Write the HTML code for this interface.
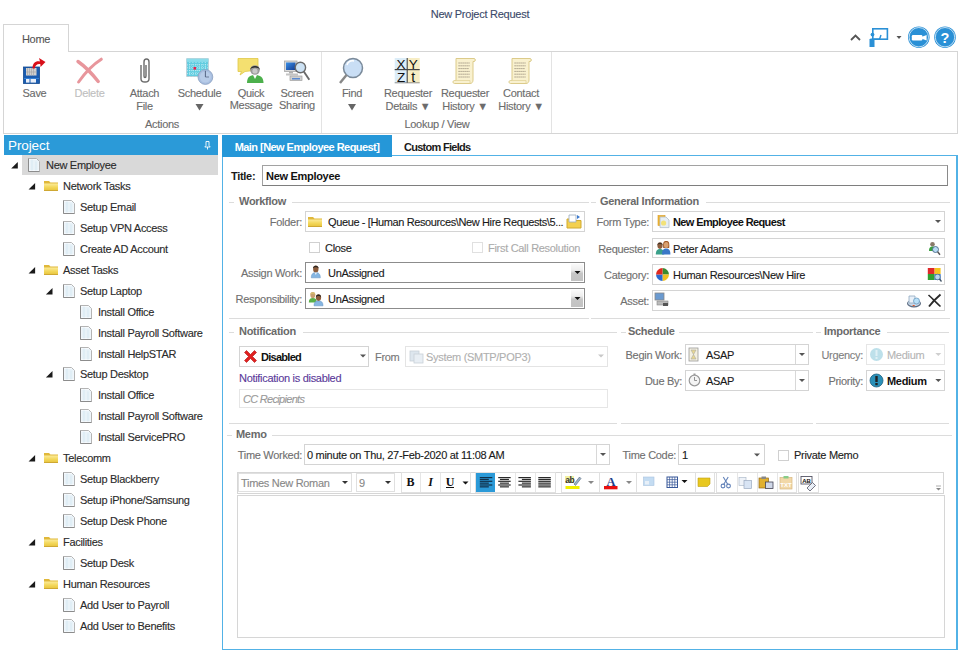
<!DOCTYPE html>
<html><head><meta charset="utf-8">
<style>
*{box-sizing:border-box;margin:0;padding:0}
html,body{width:960px;height:653px;overflow:hidden;background:#fff}
body{position:relative;font-family:"Liberation Sans",sans-serif;font-size:11px;color:#1a1a1a}
.a{position:absolute}
.t{position:absolute;white-space:nowrap;line-height:12px;font-size:11px;letter-spacing:-0.3px;-webkit-text-stroke:0.12px currentColor}
.g{color:#6e6e6e}
.b{font-weight:bold;-webkit-text-stroke:0}
.box{position:absolute;border:1px solid #d4d4d4;background:#fff}
.dk{border-color:#8c8c8c}
.rt{color:#666}
svg{position:absolute;overflow:visible}
</style></head><body>
<div class="t " style="left:380px;top:8px;width:200px;text-align:center;color:#3c4a6a;letter-spacing:-0.25px">New Project Request</div><div class="a" style="left:3px;top:24px;width:66px;height:28px;border:1px solid #d5d5d5;border-bottom:none;background:#fff;z-index:2"></div><div class="a" style="left:3px;top:51px;width:955px;height:83px;border:1px solid #d5d5d5;background:#fff;z-index:1"></div><div class="a" style="left:4px;top:51px;width:64px;height:2px;background:#fff;z-index:2"></div><div class="a" style="left:321px;top:52px;width:1px;height:81px;background:#e3e3e3;z-index:2"></div><div class="a" style="left:551px;top:52px;width:1px;height:81px;background:#e3e3e3;z-index:2"></div><div style="position:absolute;left:0;top:0;z-index:3"><div class="t " style="left:3px;top:33px;width:66px;text-align:center;color:#555">Home</div><div class="t " style="left:-5.5px;top:87px;width:80px;text-align:center;color:#6c6c6c">Save</div><div class="t " style="left:49.5px;top:87px;width:80px;text-align:center;color:#c0c0c0">Delete</div><div class="t " style="left:104.5px;top:87px;width:80px;text-align:center;color:#6c6c6c">Attach</div><div class="t " style="left:104.5px;top:100px;width:80px;text-align:center;color:#6c6c6c">File</div><div class="t " style="left:159.5px;top:87px;width:80px;text-align:center;color:#6c6c6c">Schedule</div><div class="t " style="left:211.0px;top:87px;width:80px;text-align:center;color:#6c6c6c">Quick</div><div class="t " style="left:211.0px;top:98.5px;width:80px;text-align:center;color:#6c6c6c">Message</div><div class="t " style="left:257.0px;top:87px;width:80px;text-align:center;color:#6c6c6c">Screen</div><div class="t " style="left:257.0px;top:98.5px;width:80px;text-align:center;color:#6c6c6c">Sharing</div><div class="t " style="left:312.0px;top:87px;width:80px;text-align:center;color:#6c6c6c">Find</div><div class="t " style="left:368.0px;top:87px;width:80px;text-align:center;color:#6c6c6c">Requester</div><div class="t " style="left:368.0px;top:100px;width:80px;text-align:center;color:#6c6c6c">Details &#9660;</div><div class="t " style="left:425.0px;top:87px;width:80px;text-align:center;color:#6c6c6c">Requester</div><div class="t " style="left:425.0px;top:100px;width:80px;text-align:center;color:#6c6c6c">History &#9660;</div><div class="t " style="left:481.0px;top:87px;width:80px;text-align:center;color:#6c6c6c">Contact</div><div class="t " style="left:481.0px;top:100px;width:80px;text-align:center;color:#6c6c6c">History &#9660;</div><div class="t " style="left:122.0px;top:118px;width:80px;text-align:center;color:#6c6c6c">Actions</div><div class="t " style="left:377.0px;top:118px;width:120px;text-align:center;color:#6c6c6c">Lookup / View</div><svg style="left:0px;top:0px;" width="960" height="140" viewBox="0 0 960 140"><polygon points="195.5,104 203.5,104 199.5,110.5" fill="#666"/><polygon points="348,104 356,104 352,110.5" fill="#666"/></svg></div><div style="position:absolute;left:0;top:0;z-index:4"><svg style="left:18px;top:54px;" width="30" height="32" viewBox="0 0 30 32">
<rect x="5.5" y="13" width="16" height="16.5" fill="#1a5cb0"/>
<rect x="5.5" y="13" width="16" height="16.5" fill="none" stroke="#154a90" stroke-width="0.8"/>
<rect x="8" y="14" width="10.5" height="7.5" fill="#d0d0d0"/>
<g stroke="#a8a8a8" stroke-width="0.7"><line x1="9.5" y1="14" x2="9.5" y2="21.5"/><line x1="11.5" y1="14" x2="11.5" y2="21.5"/><line x1="13.5" y1="14" x2="13.5" y2="21.5"/><line x1="15.5" y1="14" x2="15.5" y2="21.5"/><line x1="8" y1="18" x2="18.5" y2="18"/></g>
<rect x="8" y="25" width="3.5" height="3.6" fill="#e8eef8"/><rect x="12.5" y="25" width="5.5" height="3.6" fill="#e8eef8"/>
<rect x="6" y="24" width="15" height="0.8" fill="#3a8ae0"/>
<path d="M14.5 14.5 C14.5 9 18 6.5 22 7.5 L21 4 L27.5 8 L22.5 13 L22.3 10 C19.5 9.5 17 11 16.8 14.5 Z" fill="#d8101a"/>
</svg><svg style="left:75px;top:56px;" width="30" height="30" viewBox="0 0 30 30">
<path d="M3 5.5 Q13 12.5 23.2 25.5" stroke="#e8969c" stroke-width="3.4" stroke-linecap="round" fill="none"/>
<path d="M26.3 3.2 Q14 11 3.6 26" stroke="#e8969c" stroke-width="3" stroke-linecap="round" fill="none"/>
</svg><svg style="left:137px;top:56px;" width="16" height="30" viewBox="0 0 16 30">
<path d="M4 9 L4 23 C4 27 12 27 12 23 L12 6 C12 2 7 2 7 6 L7 20 C7 22 9 22 9 20 L9 9" fill="none" stroke="#6a6a6a" stroke-width="1.4"/>
</svg><svg style="left:185px;top:57px;" width="30" height="30" viewBox="0 0 30 30"><rect x="1.7" y="1.7" width="21.6" height="17.8" fill="#62cde0" stroke="#b8c8d0" stroke-width="0.8"/><rect x="1.7" y="1.7" width="21.6" height="3.2" fill="#8adcea"/><line x1="4.8" y1="5" x2="4.8" y2="19.5" stroke="#e8f8fb" stroke-width="0.6" stroke-dasharray="1 1"/><line x1="7.9" y1="5" x2="7.9" y2="19.5" stroke="#e8f8fb" stroke-width="0.6" stroke-dasharray="1 1"/><line x1="11.0" y1="5" x2="11.0" y2="19.5" stroke="#e8f8fb" stroke-width="0.6" stroke-dasharray="1 1"/><line x1="14.1" y1="5" x2="14.1" y2="19.5" stroke="#e8f8fb" stroke-width="0.6" stroke-dasharray="1 1"/><line x1="17.2" y1="5" x2="17.2" y2="19.5" stroke="#e8f8fb" stroke-width="0.6" stroke-dasharray="1 1"/><line x1="20.3" y1="5" x2="20.3" y2="19.5" stroke="#e8f8fb" stroke-width="0.6" stroke-dasharray="1 1"/><line x1="2" y1="7.9" x2="23" y2="7.9" stroke="#e8f8fb" stroke-width="0.6" stroke-dasharray="1 1"/><line x1="2" y1="10.8" x2="23" y2="10.8" stroke="#e8f8fb" stroke-width="0.6" stroke-dasharray="1 1"/><line x1="2" y1="13.7" x2="23" y2="13.7" stroke="#e8f8fb" stroke-width="0.6" stroke-dasharray="1 1"/><line x1="2" y1="16.6" x2="23" y2="16.6" stroke="#e8f8fb" stroke-width="0.6" stroke-dasharray="1 1"/><rect x="8.5" y="10" width="2.6" height="2.6" fill="#e8204a"/><circle cx="20.4" cy="20" r="7.4" fill="#a9bfe0" stroke="#8aa0c0" stroke-width="0.8"/><circle cx="20.4" cy="20" r="5.5" fill="#b8cce8"/><line x1="20.4" y1="20" x2="20.4" y2="13.8" stroke="#4a5a78" stroke-width="0.9"/><line x1="20.4" y1="20" x2="24" y2="20" stroke="#4a5a78" stroke-width="0.7"/></svg><svg style="left:236px;top:56px;" width="30" height="30" viewBox="0 0 30 30">
<path d="M2 2.5 L22 2.5 L22 14 L9 15.5 L4 19 L5.5 15.5 L2 15.5 Z" fill="#f4e070" stroke="#e0c848" stroke-width="0.8"/>
<path d="M11 27 C11 21 14 19 19 19 C24 19 27.5 21 27.5 27 Z" fill="#4cb04c"/>
<path d="M17 19 L19 23 L21 19 Z" fill="#fff"/>
<circle cx="19" cy="14" r="4.8" fill="#9a9a9a"/>
<path d="M14.2 14 C13.8 8.5 24.2 8.5 23.8 14 C22.5 10.8 15.5 10.8 14.2 14 Z" fill="#2a2a2a"/>
<circle cx="19" cy="15" r="2.6" fill="#c8c8c8"/>
</svg><svg style="left:283px;top:60px;" width="30" height="26" viewBox="0 0 30 26">
<defs><linearGradient id="scr" x1="0" y1="0" x2="1" y2="1"><stop offset="0" stop-color="#3a90e8"/><stop offset="1" stop-color="#123a90"/></linearGradient></defs>
<rect x="1.5" y="1" width="12.5" height="10.5" fill="#d8d8d8" stroke="#a8a8a8" stroke-width="0.8"/>
<rect x="3" y="2.5" width="9.5" height="7.5" fill="url(#scr)"/>
<rect x="6" y="11.5" width="4" height="2" fill="#b0b0b0"/><rect x="3" y="13.5" width="12" height="2" fill="#c4c4c4"/>
<rect x="7" y="16" width="12" height="4.5" fill="#d0d0d0" stroke="#a0a0a0" stroke-width="0.7"/>
<rect x="9" y="18" width="8" height="1.5" fill="#5a8ad0"/>
<circle cx="17.4" cy="7.5" r="5.2" fill="#c8def2" fill-opacity="0.92" stroke="#6a6a6a" stroke-width="1.4"/>
<line x1="20.8" y1="11.5" x2="26.3" y2="19.8" stroke="#6a6a6a" stroke-width="1.9"/>
</svg><svg style="left:338px;top:57px;" width="28" height="30" viewBox="0 0 28 30">
<circle cx="15" cy="11" r="9.5" fill="#c9def5" stroke="#7a8a9a" stroke-width="1.5"/>
<path d="M9 8 C10 5 13 3.5 16 4" fill="none" stroke="#fff" stroke-width="1.5"/>
<line x1="8.5" y1="18" x2="2" y2="26" stroke="#888" stroke-width="2.4"/>
</svg><svg style="left:394px;top:57px;" width="28" height="28" viewBox="0 0 28 28">
<rect x="0.7" y="1" width="12.5" height="12" fill="#dcedf8"/><rect x="13.2" y="1" width="12.5" height="12" fill="#f7edc4"/>
<rect x="0.7" y="13" width="12.5" height="13" fill="#dcedf8"/><rect x="13.2" y="13" width="12.5" height="13" fill="#f7edc4"/>
<line x1="13.2" y1="1" x2="13.2" y2="26" stroke="#333" stroke-width="1"/><line x1="0.7" y1="12.6" x2="25.7" y2="12.6" stroke="#444" stroke-width="1.2"/>
<line x1="0.7" y1="25.8" x2="25.7" y2="25.8" stroke="#777" stroke-width="0.8"/>
<text x="7" y="11.5" text-anchor="middle" font-family="Liberation Sans" font-size="13.5" fill="#111">X</text>
<text x="19.3" y="11.5" text-anchor="middle" font-family="Liberation Sans" font-size="13.5" fill="#111">Y</text>
<text x="7" y="24.5" text-anchor="middle" font-family="Liberation Sans" font-size="13.5" fill="#111">Z</text>
<text x="19.3" y="24.5" text-anchor="middle" font-family="Liberation Sans" font-size="14" fill="#111">t</text>
</svg><svg style="left:452px;top:57px;" width="26" height="28" viewBox="0 0 26 28">
<path d="M4 1.5 L22 1.5 C23.8 1.5 23.8 4.5 22 4.5 L21 4.5 L21 23 C21 25 20 26.5 18 26.5 L2.5 26.5 C0.5 26.5 0.5 23.5 2.5 23.5 L4 23.5 Z" fill="#f9f1cf" stroke="#dccb8a" stroke-width="1"/>
<path d="M2.5 23.5 L18 23.5 L18 26.5" fill="none" stroke="#e2d49a" stroke-width="0.8"/>
<g stroke="#8a8070" stroke-width="0.9" stroke-dasharray="1.2 0.8"><line x1="6.5" y1="6" x2="17.5" y2="6"/><line x1="6.5" y1="8.8" x2="17.5" y2="8.8"/><line x1="6.5" y1="11.6" x2="17" y2="11.6"/><line x1="6.5" y1="14.4" x2="17.5" y2="14.4"/><line x1="6.5" y1="17.2" x2="17.5" y2="17.2"/><line x1="6.5" y1="20" x2="17.5" y2="20"/></g>
</svg><svg style="left:508px;top:57px;" width="26" height="28" viewBox="0 0 26 28">
<path d="M4 1.5 L22 1.5 C23.8 1.5 23.8 4.5 22 4.5 L21 4.5 L21 23 C21 25 20 26.5 18 26.5 L2.5 26.5 C0.5 26.5 0.5 23.5 2.5 23.5 L4 23.5 Z" fill="#f9f1cf" stroke="#dccb8a" stroke-width="1"/>
<path d="M2.5 23.5 L18 23.5 L18 26.5" fill="none" stroke="#e2d49a" stroke-width="0.8"/>
<g stroke="#8a8070" stroke-width="0.9" stroke-dasharray="1.2 0.8"><line x1="6.5" y1="6" x2="17.5" y2="6"/><line x1="6.5" y1="8.8" x2="17.5" y2="8.8"/><line x1="6.5" y1="11.6" x2="17" y2="11.6"/><line x1="6.5" y1="14.4" x2="17.5" y2="14.4"/><line x1="6.5" y1="17.2" x2="17.5" y2="17.2"/><line x1="6.5" y1="20" x2="17.5" y2="20"/></g>
</svg></div><svg style="left:0px;top:0px;" width="960" height="60" viewBox="0 0 960 60">
<polyline points="851,40 855.5,35.5 860,40" fill="none" stroke="#555" stroke-width="1.8"/>
<rect x="872.8" y="28.8" width="14.6" height="10.4" fill="none" stroke="#2a90d6" stroke-width="1.6"/>
<polyline points="874,39.2 879.5,39.2 881,35" fill="none" stroke="#2a90d6" stroke-width="1.4"/>
<circle cx="872.5" cy="34.6" r="1.9" fill="#2a90d6"/>
<path d="M869.5 47 L869.5 39.5 C869.5 38.3 874.5 38.3 874.5 39.5 L874.5 47 Z" fill="#2a90d6"/>
<polygon points="896.5,36 901.5,36 899,39" fill="#555"/>
<circle cx="918.8" cy="37.2" r="10.8" fill="#2a90d6"/>
<circle cx="918.8" cy="37.2" r="9.7" fill="none" stroke="#fff" stroke-width="0.7"/>
<rect x="911.8" y="35" width="10.6" height="5.5" rx="1.2" fill="#fff"/>
<polygon points="922,36.8 926.6,35 926.6,40.5 922,38.7" fill="#fff"/>
<circle cx="945" cy="37.2" r="10.8" fill="#2a90d6"/>
<circle cx="945" cy="37.2" r="9.7" fill="none" stroke="#fff" stroke-width="0.7"/>
<text x="945" y="42.6" text-anchor="middle" font-family="Liberation Sans" font-weight="bold" font-size="14.5" fill="#fff">?</text>
</svg><div class="a" style="left:4px;top:135px;width:214px;height:20px;background:#2b9ad8"></div><div class="t" style="left:8px;top:138px;font-size:13.5px;line-height:16px;color:#fff;letter-spacing:-0.1px;-webkit-text-stroke:0">Project</div><svg style="left:203px;top:140px;" width="9" height="11" viewBox="0 0 9 11"><path d="M3 1.5 L6 1.5 L6 5.5 L7.2 7 L1.8 7 L3 5.5 Z" fill="none" stroke="#fff" stroke-width="0.9"/><line x1="4.5" y1="7" x2="4.5" y2="9.5" stroke="#fff" stroke-width="0.9"/></svg><div class="a" style="left:22px;top:155px;width:196px;height:20px;background:#d9d9d9"></div><svg style="left:28px;top:158px;" width="12" height="14" viewBox="0 0 12 14"><path d="M0.5 0.5 L8.5 0.5 L11.5 3.5 L11.5 13.5 L0.5 13.5 Z" fill="#f6fafd" stroke="#b4b4b4" stroke-width="1"/><g stroke="#cfe2ef" stroke-width="0.6"><line x1="1.5" y1="3" x2="10.5" y2="3"/><line x1="1.5" y1="5" x2="10.5" y2="5"/><line x1="1.5" y1="7" x2="10.5" y2="7"/><line x1="1.5" y1="9" x2="10.5" y2="9"/><line x1="1.5" y1="11" x2="10.5" y2="11"/><line x1="4" y1="1.5" x2="4" y2="12.5"/><line x1="8" y1="3.5" x2="8" y2="12.5"/></g><path d="M0.5 0.5 L0.5 13.5 L11.5 13.5" fill="none" stroke="#8c8c8c" stroke-width="1"/></svg><div class="t " style="left:46px;top:159px;color:#2b2b2b">New Employee</div><svg style="left:44px;top:180px;" width="14" height="11" viewBox="0 0 14 11"><defs><linearGradient id="fg" x1="0" y1="0" x2="0" y2="1"><stop offset="0" stop-color="#fbeb9a"/><stop offset="0.5" stop-color="#f3d75a"/><stop offset="1" stop-color="#e6c23a"/></linearGradient></defs><path d="M0 1 L5 1 L6.5 2.5 L14 2.5 L14 11 L0 11 Z" fill="#e0b83a"/><rect x="0" y="3.5" width="14" height="7.5" fill="url(#fg)"/><rect x="0" y="10.2" width="14" height="0.8" fill="#c9a030"/></svg><div class="t " style="left:63px;top:180px;color:#2b2b2b">Network Tasks</div><svg style="left:63px;top:200px;" width="12" height="14" viewBox="0 0 12 14"><path d="M0.5 0.5 L8.5 0.5 L11.5 3.5 L11.5 13.5 L0.5 13.5 Z" fill="#f6fafd" stroke="#b4b4b4" stroke-width="1"/><g stroke="#cfe2ef" stroke-width="0.6"><line x1="1.5" y1="3" x2="10.5" y2="3"/><line x1="1.5" y1="5" x2="10.5" y2="5"/><line x1="1.5" y1="7" x2="10.5" y2="7"/><line x1="1.5" y1="9" x2="10.5" y2="9"/><line x1="1.5" y1="11" x2="10.5" y2="11"/><line x1="4" y1="1.5" x2="4" y2="12.5"/><line x1="8" y1="3.5" x2="8" y2="12.5"/></g><path d="M0.5 0.5 L0.5 13.5 L11.5 13.5" fill="none" stroke="#8c8c8c" stroke-width="1"/></svg><div class="t " style="left:80px;top:201px;color:#2b2b2b">Setup Email</div><svg style="left:63px;top:221px;" width="12" height="14" viewBox="0 0 12 14"><path d="M0.5 0.5 L8.5 0.5 L11.5 3.5 L11.5 13.5 L0.5 13.5 Z" fill="#f6fafd" stroke="#b4b4b4" stroke-width="1"/><g stroke="#cfe2ef" stroke-width="0.6"><line x1="1.5" y1="3" x2="10.5" y2="3"/><line x1="1.5" y1="5" x2="10.5" y2="5"/><line x1="1.5" y1="7" x2="10.5" y2="7"/><line x1="1.5" y1="9" x2="10.5" y2="9"/><line x1="1.5" y1="11" x2="10.5" y2="11"/><line x1="4" y1="1.5" x2="4" y2="12.5"/><line x1="8" y1="3.5" x2="8" y2="12.5"/></g><path d="M0.5 0.5 L0.5 13.5 L11.5 13.5" fill="none" stroke="#8c8c8c" stroke-width="1"/></svg><div class="t " style="left:80px;top:222px;color:#2b2b2b">Setup VPN Access</div><svg style="left:63px;top:242px;" width="12" height="14" viewBox="0 0 12 14"><path d="M0.5 0.5 L8.5 0.5 L11.5 3.5 L11.5 13.5 L0.5 13.5 Z" fill="#f6fafd" stroke="#b4b4b4" stroke-width="1"/><g stroke="#cfe2ef" stroke-width="0.6"><line x1="1.5" y1="3" x2="10.5" y2="3"/><line x1="1.5" y1="5" x2="10.5" y2="5"/><line x1="1.5" y1="7" x2="10.5" y2="7"/><line x1="1.5" y1="9" x2="10.5" y2="9"/><line x1="1.5" y1="11" x2="10.5" y2="11"/><line x1="4" y1="1.5" x2="4" y2="12.5"/><line x1="8" y1="3.5" x2="8" y2="12.5"/></g><path d="M0.5 0.5 L0.5 13.5 L11.5 13.5" fill="none" stroke="#8c8c8c" stroke-width="1"/></svg><div class="t " style="left:80px;top:243px;color:#2b2b2b">Create AD Account</div><svg style="left:44px;top:264px;" width="14" height="11" viewBox="0 0 14 11"><defs><linearGradient id="fg" x1="0" y1="0" x2="0" y2="1"><stop offset="0" stop-color="#fbeb9a"/><stop offset="0.5" stop-color="#f3d75a"/><stop offset="1" stop-color="#e6c23a"/></linearGradient></defs><path d="M0 1 L5 1 L6.5 2.5 L14 2.5 L14 11 L0 11 Z" fill="#e0b83a"/><rect x="0" y="3.5" width="14" height="7.5" fill="url(#fg)"/><rect x="0" y="10.2" width="14" height="0.8" fill="#c9a030"/></svg><div class="t " style="left:63px;top:264px;color:#2b2b2b">Asset Tasks</div><svg style="left:63px;top:284px;" width="12" height="14" viewBox="0 0 12 14"><path d="M0.5 0.5 L8.5 0.5 L11.5 3.5 L11.5 13.5 L0.5 13.5 Z" fill="#f6fafd" stroke="#b4b4b4" stroke-width="1"/><g stroke="#cfe2ef" stroke-width="0.6"><line x1="1.5" y1="3" x2="10.5" y2="3"/><line x1="1.5" y1="5" x2="10.5" y2="5"/><line x1="1.5" y1="7" x2="10.5" y2="7"/><line x1="1.5" y1="9" x2="10.5" y2="9"/><line x1="1.5" y1="11" x2="10.5" y2="11"/><line x1="4" y1="1.5" x2="4" y2="12.5"/><line x1="8" y1="3.5" x2="8" y2="12.5"/></g><path d="M0.5 0.5 L0.5 13.5 L11.5 13.5" fill="none" stroke="#8c8c8c" stroke-width="1"/></svg><div class="t " style="left:80px;top:285px;color:#2b2b2b">Setup Laptop</div><svg style="left:80px;top:305px;" width="12" height="14" viewBox="0 0 12 14"><path d="M0.5 0.5 L8.5 0.5 L11.5 3.5 L11.5 13.5 L0.5 13.5 Z" fill="#f6fafd" stroke="#b4b4b4" stroke-width="1"/><g stroke="#cfe2ef" stroke-width="0.6"><line x1="1.5" y1="3" x2="10.5" y2="3"/><line x1="1.5" y1="5" x2="10.5" y2="5"/><line x1="1.5" y1="7" x2="10.5" y2="7"/><line x1="1.5" y1="9" x2="10.5" y2="9"/><line x1="1.5" y1="11" x2="10.5" y2="11"/><line x1="4" y1="1.5" x2="4" y2="12.5"/><line x1="8" y1="3.5" x2="8" y2="12.5"/></g><path d="M0.5 0.5 L0.5 13.5 L11.5 13.5" fill="none" stroke="#8c8c8c" stroke-width="1"/></svg><div class="t " style="left:98px;top:306px;color:#2b2b2b">Install Office</div><svg style="left:80px;top:326px;" width="12" height="14" viewBox="0 0 12 14"><path d="M0.5 0.5 L8.5 0.5 L11.5 3.5 L11.5 13.5 L0.5 13.5 Z" fill="#f6fafd" stroke="#b4b4b4" stroke-width="1"/><g stroke="#cfe2ef" stroke-width="0.6"><line x1="1.5" y1="3" x2="10.5" y2="3"/><line x1="1.5" y1="5" x2="10.5" y2="5"/><line x1="1.5" y1="7" x2="10.5" y2="7"/><line x1="1.5" y1="9" x2="10.5" y2="9"/><line x1="1.5" y1="11" x2="10.5" y2="11"/><line x1="4" y1="1.5" x2="4" y2="12.5"/><line x1="8" y1="3.5" x2="8" y2="12.5"/></g><path d="M0.5 0.5 L0.5 13.5 L11.5 13.5" fill="none" stroke="#8c8c8c" stroke-width="1"/></svg><div class="t " style="left:98px;top:327px;color:#2b2b2b">Install Payroll Software</div><svg style="left:80px;top:347px;" width="12" height="14" viewBox="0 0 12 14"><path d="M0.5 0.5 L8.5 0.5 L11.5 3.5 L11.5 13.5 L0.5 13.5 Z" fill="#f6fafd" stroke="#b4b4b4" stroke-width="1"/><g stroke="#cfe2ef" stroke-width="0.6"><line x1="1.5" y1="3" x2="10.5" y2="3"/><line x1="1.5" y1="5" x2="10.5" y2="5"/><line x1="1.5" y1="7" x2="10.5" y2="7"/><line x1="1.5" y1="9" x2="10.5" y2="9"/><line x1="1.5" y1="11" x2="10.5" y2="11"/><line x1="4" y1="1.5" x2="4" y2="12.5"/><line x1="8" y1="3.5" x2="8" y2="12.5"/></g><path d="M0.5 0.5 L0.5 13.5 L11.5 13.5" fill="none" stroke="#8c8c8c" stroke-width="1"/></svg><div class="t " style="left:98px;top:348px;color:#2b2b2b">Install HelpSTAR</div><svg style="left:63px;top:367px;" width="12" height="14" viewBox="0 0 12 14"><path d="M0.5 0.5 L8.5 0.5 L11.5 3.5 L11.5 13.5 L0.5 13.5 Z" fill="#f6fafd" stroke="#b4b4b4" stroke-width="1"/><g stroke="#cfe2ef" stroke-width="0.6"><line x1="1.5" y1="3" x2="10.5" y2="3"/><line x1="1.5" y1="5" x2="10.5" y2="5"/><line x1="1.5" y1="7" x2="10.5" y2="7"/><line x1="1.5" y1="9" x2="10.5" y2="9"/><line x1="1.5" y1="11" x2="10.5" y2="11"/><line x1="4" y1="1.5" x2="4" y2="12.5"/><line x1="8" y1="3.5" x2="8" y2="12.5"/></g><path d="M0.5 0.5 L0.5 13.5 L11.5 13.5" fill="none" stroke="#8c8c8c" stroke-width="1"/></svg><div class="t " style="left:80px;top:368px;color:#2b2b2b">Setup Desktop</div><svg style="left:80px;top:388px;" width="12" height="14" viewBox="0 0 12 14"><path d="M0.5 0.5 L8.5 0.5 L11.5 3.5 L11.5 13.5 L0.5 13.5 Z" fill="#f6fafd" stroke="#b4b4b4" stroke-width="1"/><g stroke="#cfe2ef" stroke-width="0.6"><line x1="1.5" y1="3" x2="10.5" y2="3"/><line x1="1.5" y1="5" x2="10.5" y2="5"/><line x1="1.5" y1="7" x2="10.5" y2="7"/><line x1="1.5" y1="9" x2="10.5" y2="9"/><line x1="1.5" y1="11" x2="10.5" y2="11"/><line x1="4" y1="1.5" x2="4" y2="12.5"/><line x1="8" y1="3.5" x2="8" y2="12.5"/></g><path d="M0.5 0.5 L0.5 13.5 L11.5 13.5" fill="none" stroke="#8c8c8c" stroke-width="1"/></svg><div class="t " style="left:98px;top:389px;color:#2b2b2b">Install Office</div><svg style="left:80px;top:409px;" width="12" height="14" viewBox="0 0 12 14"><path d="M0.5 0.5 L8.5 0.5 L11.5 3.5 L11.5 13.5 L0.5 13.5 Z" fill="#f6fafd" stroke="#b4b4b4" stroke-width="1"/><g stroke="#cfe2ef" stroke-width="0.6"><line x1="1.5" y1="3" x2="10.5" y2="3"/><line x1="1.5" y1="5" x2="10.5" y2="5"/><line x1="1.5" y1="7" x2="10.5" y2="7"/><line x1="1.5" y1="9" x2="10.5" y2="9"/><line x1="1.5" y1="11" x2="10.5" y2="11"/><line x1="4" y1="1.5" x2="4" y2="12.5"/><line x1="8" y1="3.5" x2="8" y2="12.5"/></g><path d="M0.5 0.5 L0.5 13.5 L11.5 13.5" fill="none" stroke="#8c8c8c" stroke-width="1"/></svg><div class="t " style="left:98px;top:410px;color:#2b2b2b">Install Payroll Software</div><svg style="left:80px;top:430px;" width="12" height="14" viewBox="0 0 12 14"><path d="M0.5 0.5 L8.5 0.5 L11.5 3.5 L11.5 13.5 L0.5 13.5 Z" fill="#f6fafd" stroke="#b4b4b4" stroke-width="1"/><g stroke="#cfe2ef" stroke-width="0.6"><line x1="1.5" y1="3" x2="10.5" y2="3"/><line x1="1.5" y1="5" x2="10.5" y2="5"/><line x1="1.5" y1="7" x2="10.5" y2="7"/><line x1="1.5" y1="9" x2="10.5" y2="9"/><line x1="1.5" y1="11" x2="10.5" y2="11"/><line x1="4" y1="1.5" x2="4" y2="12.5"/><line x1="8" y1="3.5" x2="8" y2="12.5"/></g><path d="M0.5 0.5 L0.5 13.5 L11.5 13.5" fill="none" stroke="#8c8c8c" stroke-width="1"/></svg><div class="t " style="left:98px;top:431px;color:#2b2b2b">Install ServicePRO</div><svg style="left:44px;top:452px;" width="14" height="11" viewBox="0 0 14 11"><defs><linearGradient id="fg" x1="0" y1="0" x2="0" y2="1"><stop offset="0" stop-color="#fbeb9a"/><stop offset="0.5" stop-color="#f3d75a"/><stop offset="1" stop-color="#e6c23a"/></linearGradient></defs><path d="M0 1 L5 1 L6.5 2.5 L14 2.5 L14 11 L0 11 Z" fill="#e0b83a"/><rect x="0" y="3.5" width="14" height="7.5" fill="url(#fg)"/><rect x="0" y="10.2" width="14" height="0.8" fill="#c9a030"/></svg><div class="t " style="left:63px;top:452px;color:#2b2b2b">Telecomm</div><svg style="left:63px;top:472px;" width="12" height="14" viewBox="0 0 12 14"><path d="M0.5 0.5 L8.5 0.5 L11.5 3.5 L11.5 13.5 L0.5 13.5 Z" fill="#f6fafd" stroke="#b4b4b4" stroke-width="1"/><g stroke="#cfe2ef" stroke-width="0.6"><line x1="1.5" y1="3" x2="10.5" y2="3"/><line x1="1.5" y1="5" x2="10.5" y2="5"/><line x1="1.5" y1="7" x2="10.5" y2="7"/><line x1="1.5" y1="9" x2="10.5" y2="9"/><line x1="1.5" y1="11" x2="10.5" y2="11"/><line x1="4" y1="1.5" x2="4" y2="12.5"/><line x1="8" y1="3.5" x2="8" y2="12.5"/></g><path d="M0.5 0.5 L0.5 13.5 L11.5 13.5" fill="none" stroke="#8c8c8c" stroke-width="1"/></svg><div class="t " style="left:80px;top:473px;color:#2b2b2b">Setup Blackberry</div><svg style="left:63px;top:493px;" width="12" height="14" viewBox="0 0 12 14"><path d="M0.5 0.5 L8.5 0.5 L11.5 3.5 L11.5 13.5 L0.5 13.5 Z" fill="#f6fafd" stroke="#b4b4b4" stroke-width="1"/><g stroke="#cfe2ef" stroke-width="0.6"><line x1="1.5" y1="3" x2="10.5" y2="3"/><line x1="1.5" y1="5" x2="10.5" y2="5"/><line x1="1.5" y1="7" x2="10.5" y2="7"/><line x1="1.5" y1="9" x2="10.5" y2="9"/><line x1="1.5" y1="11" x2="10.5" y2="11"/><line x1="4" y1="1.5" x2="4" y2="12.5"/><line x1="8" y1="3.5" x2="8" y2="12.5"/></g><path d="M0.5 0.5 L0.5 13.5 L11.5 13.5" fill="none" stroke="#8c8c8c" stroke-width="1"/></svg><div class="t " style="left:80px;top:494px;color:#2b2b2b">Setup iPhone/Samsung</div><svg style="left:63px;top:514px;" width="12" height="14" viewBox="0 0 12 14"><path d="M0.5 0.5 L8.5 0.5 L11.5 3.5 L11.5 13.5 L0.5 13.5 Z" fill="#f6fafd" stroke="#b4b4b4" stroke-width="1"/><g stroke="#cfe2ef" stroke-width="0.6"><line x1="1.5" y1="3" x2="10.5" y2="3"/><line x1="1.5" y1="5" x2="10.5" y2="5"/><line x1="1.5" y1="7" x2="10.5" y2="7"/><line x1="1.5" y1="9" x2="10.5" y2="9"/><line x1="1.5" y1="11" x2="10.5" y2="11"/><line x1="4" y1="1.5" x2="4" y2="12.5"/><line x1="8" y1="3.5" x2="8" y2="12.5"/></g><path d="M0.5 0.5 L0.5 13.5 L11.5 13.5" fill="none" stroke="#8c8c8c" stroke-width="1"/></svg><div class="t " style="left:80px;top:515px;color:#2b2b2b">Setup Desk Phone</div><svg style="left:44px;top:536px;" width="14" height="11" viewBox="0 0 14 11"><defs><linearGradient id="fg" x1="0" y1="0" x2="0" y2="1"><stop offset="0" stop-color="#fbeb9a"/><stop offset="0.5" stop-color="#f3d75a"/><stop offset="1" stop-color="#e6c23a"/></linearGradient></defs><path d="M0 1 L5 1 L6.5 2.5 L14 2.5 L14 11 L0 11 Z" fill="#e0b83a"/><rect x="0" y="3.5" width="14" height="7.5" fill="url(#fg)"/><rect x="0" y="10.2" width="14" height="0.8" fill="#c9a030"/></svg><div class="t " style="left:63px;top:536px;color:#2b2b2b">Facilities</div><svg style="left:63px;top:556px;" width="12" height="14" viewBox="0 0 12 14"><path d="M0.5 0.5 L8.5 0.5 L11.5 3.5 L11.5 13.5 L0.5 13.5 Z" fill="#f6fafd" stroke="#b4b4b4" stroke-width="1"/><g stroke="#cfe2ef" stroke-width="0.6"><line x1="1.5" y1="3" x2="10.5" y2="3"/><line x1="1.5" y1="5" x2="10.5" y2="5"/><line x1="1.5" y1="7" x2="10.5" y2="7"/><line x1="1.5" y1="9" x2="10.5" y2="9"/><line x1="1.5" y1="11" x2="10.5" y2="11"/><line x1="4" y1="1.5" x2="4" y2="12.5"/><line x1="8" y1="3.5" x2="8" y2="12.5"/></g><path d="M0.5 0.5 L0.5 13.5 L11.5 13.5" fill="none" stroke="#8c8c8c" stroke-width="1"/></svg><div class="t " style="left:80px;top:557px;color:#2b2b2b">Setup Desk</div><svg style="left:44px;top:578px;" width="14" height="11" viewBox="0 0 14 11"><defs><linearGradient id="fg" x1="0" y1="0" x2="0" y2="1"><stop offset="0" stop-color="#fbeb9a"/><stop offset="0.5" stop-color="#f3d75a"/><stop offset="1" stop-color="#e6c23a"/></linearGradient></defs><path d="M0 1 L5 1 L6.5 2.5 L14 2.5 L14 11 L0 11 Z" fill="#e0b83a"/><rect x="0" y="3.5" width="14" height="7.5" fill="url(#fg)"/><rect x="0" y="10.2" width="14" height="0.8" fill="#c9a030"/></svg><div class="t " style="left:63px;top:578px;color:#2b2b2b">Human Resources</div><svg style="left:63px;top:598px;" width="12" height="14" viewBox="0 0 12 14"><path d="M0.5 0.5 L8.5 0.5 L11.5 3.5 L11.5 13.5 L0.5 13.5 Z" fill="#f6fafd" stroke="#b4b4b4" stroke-width="1"/><g stroke="#cfe2ef" stroke-width="0.6"><line x1="1.5" y1="3" x2="10.5" y2="3"/><line x1="1.5" y1="5" x2="10.5" y2="5"/><line x1="1.5" y1="7" x2="10.5" y2="7"/><line x1="1.5" y1="9" x2="10.5" y2="9"/><line x1="1.5" y1="11" x2="10.5" y2="11"/><line x1="4" y1="1.5" x2="4" y2="12.5"/><line x1="8" y1="3.5" x2="8" y2="12.5"/></g><path d="M0.5 0.5 L0.5 13.5 L11.5 13.5" fill="none" stroke="#8c8c8c" stroke-width="1"/></svg><div class="t " style="left:80px;top:599px;color:#2b2b2b">Add User to Payroll</div><svg style="left:63px;top:619px;" width="12" height="14" viewBox="0 0 12 14"><path d="M0.5 0.5 L8.5 0.5 L11.5 3.5 L11.5 13.5 L0.5 13.5 Z" fill="#f6fafd" stroke="#b4b4b4" stroke-width="1"/><g stroke="#cfe2ef" stroke-width="0.6"><line x1="1.5" y1="3" x2="10.5" y2="3"/><line x1="1.5" y1="5" x2="10.5" y2="5"/><line x1="1.5" y1="7" x2="10.5" y2="7"/><line x1="1.5" y1="9" x2="10.5" y2="9"/><line x1="1.5" y1="11" x2="10.5" y2="11"/><line x1="4" y1="1.5" x2="4" y2="12.5"/><line x1="8" y1="3.5" x2="8" y2="12.5"/></g><path d="M0.5 0.5 L0.5 13.5 L11.5 13.5" fill="none" stroke="#8c8c8c" stroke-width="1"/></svg><div class="t " style="left:80px;top:620px;color:#2b2b2b">Add User to Benefits</div><svg style="left:0px;top:0px;" width="220" height="653" viewBox="0 0 220 653"><polygon points="17.80,162 17.80,168.6 11.20,168.6" fill="#1a1a1a"/><polygon points="35.15,183 35.15,189.6 28.55,189.6" fill="#1a1a1a"/><polygon points="35.15,267 35.15,273.6 28.55,273.6" fill="#1a1a1a"/><polygon points="52.50,288 52.50,294.6 45.90,294.6" fill="#1a1a1a"/><polygon points="52.50,371 52.50,377.6 45.90,377.6" fill="#1a1a1a"/><polygon points="35.15,455 35.15,461.6 28.55,461.6" fill="#1a1a1a"/><polygon points="35.15,539 35.15,545.6 28.55,545.6" fill="#1a1a1a"/><polygon points="35.15,581 35.15,587.6 28.55,587.6" fill="#1a1a1a"/></svg><div class="a" style="left:222px;top:135px;width:170px;height:22px;background:#2597d8;z-index:2"></div><div class="t b" style="left:222px;top:141px;width:170px;text-align:center;color:#fff;letter-spacing:-0.55px;z-index:3">Main [New Employee Request]</div><div class="t b" style="left:404px;top:141px;color:#1a1a1a;letter-spacing:-0.72px">Custom Fields</div><div class="a" style="left:222px;top:155px;width:736px;height:495px;border:1.5px solid #52b2e6;border-right-width:2px"></div><div class="t b" style="left:231px;top:170px;color:#1a1a1a">Title:</div><div class="a" style="left:262px;top:165px;width:686px;height:21px;border:1px solid #a2a2a2;border-right-color:#8a8a8a;border-bottom-color:#7e7e7e;background:#fff"></div><div class="t b" style="left:266px;top:170px;color:#111">New Employee</div><div class="a" style="left:229px;top:202px;width:5px;height:1px;background:#dcdcdc"></div><div class="t b" style="left:239px;top:195px;color:#6a6a6a">Workflow</div><div class="a" style="left:292px;top:202px;width:297px;height:1px;background:#dcdcdc"></div><div class="t " style="left:102px;top:216px;width:200px;text-align:right;color:#707070">Folder:</div><div class="box " style="left:305px;top:211px;width:280px;height:21px;"></div><svg style="left:308px;top:216px;" width="15" height="11" viewBox="0 0 15 11"><defs><linearGradient id="fg" x1="0" y1="0" x2="0" y2="1"><stop offset="0" stop-color="#fbeb9a"/><stop offset="0.5" stop-color="#f3d75a"/><stop offset="1" stop-color="#e6c23a"/></linearGradient></defs><path d="M0 1 L5 1 L6.5 2.5 L14 2.5 L14 11 L0 11 Z" fill="#e0b83a"/><rect x="0" y="3.5" width="14" height="7.5" fill="url(#fg)"/><rect x="0" y="10.2" width="14" height="0.8" fill="#c9a030"/></svg><div class="t " style="left:328px;top:216px;color:#1a1a1a;letter-spacing:-0.38px">Queue - [Human Resources\New Hire Requests\5...</div><svg style="left:566px;top:214px;" width="17" height="15" viewBox="0 0 17 15"><path d="M1 5 L6 5 L7.5 6.5 L15 6.5 L15 14 L1 14 Z" fill="#f3d050" stroke="#d0aa30" stroke-width="1"/><path d="M3 1 L10 1 L10 8 L3 8 Z" fill="#fff" stroke="#9ab" stroke-width="0.8"/><path d="M11 1 L14 3 L11 5 Z" fill="#3a7ad0"/></svg><div class="box " style="left:309px;top:242px;width:11px;height:11px;border-color:#d0d0d0"></div><div class="t " style="left:325px;top:242px;color:#222">Close</div><div class="box " style="left:472px;top:242px;width:11px;height:11px;border-color:#e0e0e0"></div><div class="t " style="left:488px;top:242px;color:#ababab">First Call Resolution</div><div class="t " style="left:102px;top:267px;width:200px;text-align:right;color:#707070">Assign Work:</div><div class="box dk" style="left:305px;top:262px;width:280px;height:21px;"></div><div class="a" style="left:571px;top:264px;width:12px;height:17px;background:linear-gradient(#fafafa 0%,#eeeeee 35%,#c6c6c6 55%,#c2c2c2 100%)"></div><div class="t " style="left:102px;top:293px;width:200px;text-align:right;color:#707070">Responsibility:</div><div class="box dk" style="left:305px;top:288px;width:280px;height:21px;"></div><div class="a" style="left:571px;top:290px;width:12px;height:17px;background:linear-gradient(#fafafa 0%,#eeeeee 35%,#c6c6c6 55%,#c2c2c2 100%)"></div><svg style="left:310px;top:264px;" width="12" height="15" viewBox="0 0 12 15"><path d="M1.3 13.8 C1.3 10 3 8.6 5.8 8.6 C8.6 8.6 10.3 10 10.3 13.8 Z" fill="#86b6e2" stroke="#6a98c8" stroke-width="0.6"/><ellipse cx="5.8" cy="5" rx="2.7" ry="3.5" fill="#8c5c3c"/><path d="M3 4.5 C2.8 0.8 8.8 0.8 8.6 4.5 C7.5 2.8 4.1 2.8 3 4.5 Z" fill="#2a2420"/><path d="M4.5 8.6 L5.8 11 L7.1 8.6 Z" fill="#e8f0f8"/></svg><div class="t " style="left:328px;top:267px;color:#1a1a1a">UnAssigned</div><svg style="left:308px;top:291px;" width="17" height="16" viewBox="0 0 17 16"><path d="M0.8 11.5 C0.8 8.3 2.3 7 4.8 7 C7.3 7 8.8 8.3 8.8 11.5 Z" fill="#5ab048"/><ellipse cx="4.8" cy="4" rx="2.5" ry="3.1" fill="#c8a070"/><path d="M2.3 3.8 C2 0.5 7.6 0.5 7.3 3.8 C6.3 2.3 3.3 2.3 2.3 3.8 Z" fill="#d8c070"/><path d="M6 14.8 C6 11.2 7.7 9.8 10.5 9.8 C13.3 9.8 15 11.2 15 14.8 Z" fill="#86b6e2" stroke="#6a98c8" stroke-width="0.6"/><ellipse cx="10.5" cy="6.6" rx="2.6" ry="3.3" fill="#8c5c3c"/><path d="M7.9 6.2 C7.7 2.6 13.3 2.6 13.1 6.2 C12 4.6 9 4.6 7.9 6.2 Z" fill="#2a2420"/></svg><div class="t " style="left:328px;top:293px;color:#1a1a1a">UnAssigned</div><div class="a" style="left:591px;top:202px;width:5px;height:1px;background:#dcdcdc"></div><div class="t b" style="left:600px;top:195px;color:#6a6a6a">General Information</div><div class="a" style="left:706px;top:202px;width:244px;height:1px;background:#dcdcdc"></div><div class="t " style="left:449px;top:216px;width:200px;text-align:right;color:#707070">Form Type:</div><div class="box " style="left:652px;top:211px;width:293px;height:21px;"></div><svg style="left:656px;top:213px;" width="16" height="17" viewBox="0 0 16 17"><rect x="2" y="2.5" width="7" height="10" fill="#f0b838" stroke="#d89820" stroke-width="0.6"/><path d="M4 4 L10 4 L13 7 L13 14.6 L4 14.6 Z" fill="#e6eef4" stroke="#b0bcc8" stroke-width="0.8"/><circle cx="7.6" cy="10" r="2.6" fill="#f2e27a"/></svg><div class="t b" style="left:673px;top:216px;color:#111;letter-spacing:-0.62px">New Employee Request</div><div class="t " style="left:449px;top:243px;width:200px;text-align:right;color:#707070">Requester:</div><div class="box " style="left:652px;top:238px;width:293px;height:20px;"></div><svg style="left:655px;top:240px;" width="17" height="16" viewBox="0 0 17 16"><path d="M0.8 14.5 C0.8 10.5 2.5 9 5 9 C7.5 9 9.2 10.5 9.2 14.5 Z" fill="#3aa08a"/><ellipse cx="5" cy="5.6" rx="2.6" ry="3.3" fill="#8c5c3c"/><path d="M2.4 5.2 C2.2 1.8 7.8 1.8 7.6 5.2 C6.6 3.6 3.4 3.6 2.4 5.2 Z" fill="#3a3028"/><path d="M7 14.5 C7 10 8.8 8.6 11.2 8.6 C13.6 8.6 15.4 10 15.4 14.5 Z" fill="#3a78c8"/><path d="M8.2 8 C7.8 2 8.5 1 11.2 1 C13.9 1 14.6 2 14.2 8 Z" fill="#a05a28"/><ellipse cx="11.2" cy="5" rx="2.3" ry="3" fill="#d8a070"/></svg><div class="t " style="left:673px;top:243px;color:#1a1a1a">Peter Adams</div><svg style="left:928px;top:241px;" width="14" height="15" viewBox="0 0 14 15"><circle cx="4.5" cy="3.2" r="2.3" fill="#8a7a6a"/><path d="M1 10 C1 6.5 2.5 5.5 4.5 5.5 C6.5 5.5 8 6.5 8 10 Z" fill="#3aa040"/><circle cx="7.5" cy="8.5" r="3" fill="#b8dcf4" stroke="#4a6a8a" stroke-width="0.9"/><line x1="9.6" y1="10.8" x2="12" y2="13.8" stroke="#555" stroke-width="1.4"/></svg><div class="t " style="left:449px;top:269px;width:200px;text-align:right;color:#707070">Category:</div><div class="box " style="left:652px;top:264px;width:293px;height:21px;"></div><svg style="left:655px;top:267px;" width="15" height="15" viewBox="0 0 15 15"><path d="M7.5 7.5 L7.5 1 A6.5 6.5 0 0 1 14 7.5 Z" fill="#3a8a30"/><path d="M7.5 7.5 L14 7.5 A6.5 6.5 0 0 1 7.5 14 Z" fill="#f0c020"/><path d="M7.5 7.5 L7.5 14 A6.5 6.5 0 0 1 1 7.5 Z" fill="#2a6ad0"/><path d="M7.5 7.5 L1 7.5 A6.5 6.5 0 0 1 7.5 1 Z" fill="#e02a20"/></svg><div class="t " style="left:673px;top:269px;color:#1a1a1a">Human Resources\New Hire</div><svg style="left:927px;top:267px;" width="16" height="16" viewBox="0 0 16 16"><rect x="0.8" y="1" width="6.8" height="6" fill="#e02828"/><rect x="7.6" y="1" width="6" height="6" fill="#f4c420"/><rect x="0.8" y="7" width="6.8" height="6" fill="#30a030"/><rect x="7.6" y="7" width="6" height="6" fill="#3070d0"/><circle cx="10.5" cy="10" r="2.8" fill="#b8d8f0" stroke="#5a7a9a" stroke-width="0.9"/><line x1="12.5" y1="12" x2="14.5" y2="14.5" stroke="#456" stroke-width="1.3"/></svg><div class="t " style="left:449px;top:295px;width:200px;text-align:right;color:#707070">Asset:</div><div class="box " style="left:652px;top:290px;width:293px;height:21px;"></div><svg style="left:654px;top:292px;" width="16" height="16" viewBox="0 0 16 16"><rect x="1" y="1" width="9" height="7" fill="#6a9ad0" stroke="#888" stroke-width="0.8"/><rect x="3" y="9" width="11" height="4" fill="#bbb" stroke="#888" stroke-width="0.6"/><rect x="9" y="11" width="5" height="3" fill="#555"/></svg><svg style="left:906px;top:294px;" width="16" height="15" viewBox="0 0 16 15"><ellipse cx="8" cy="9.5" rx="7" ry="4" fill="#5a6a80"/><ellipse cx="8" cy="9" rx="6" ry="3.2" fill="#c8d8e8"/><path d="M3 2 L9 2 L9 9 L3 9 Z" fill="#e8f0f8" stroke="#90a8c0" stroke-width="0.8"/><circle cx="10.5" cy="7" r="3" fill="#b8e0f8" stroke="#6090b8" stroke-width="0.7"/><path d="M6 11 L9 11 L8 12.5 Z" fill="#e05020"/></svg><svg style="left:927px;top:293px;" width="15" height="15" viewBox="0 0 15 15"><path d="M1.5 2 C5 5 9 9.5 13.5 13.5" fill="none" stroke="#2a2a2a" stroke-width="1.6"/><path d="M13.5 1.5 C10 4.5 5 9.5 2 13.5" fill="none" stroke="#2a2a2a" stroke-width="1.9"/></svg><div class="a" style="left:229px;top:318px;width:360px;height:1px;background:#dcdcdc"></div><div class="a" style="left:591px;top:318px;width:359px;height:1px;background:#dcdcdc"></div><div class="a" style="left:229px;top:332px;width:5px;height:1px;background:#dcdcdc"></div><div class="t b" style="left:239px;top:325px;color:#6a6a6a">Notification</div><div class="a" style="left:303px;top:332px;width:314px;height:1px;background:#dcdcdc"></div><div class="box " style="left:239px;top:346px;width:130px;height:21px;"></div><svg style="left:243px;top:349px;" width="15" height="15" viewBox="0 0 15 15"><path d="M1.5 3.5 L3.5 1.5 L7.5 5.5 L11.5 1.5 L13.5 3.5 L9.5 7.5 L13.5 11.5 L11.5 13.5 L7.5 9.5 L3.5 13.5 L1.5 11.5 L5.5 7.5 Z" fill="#e02020" stroke="#b01010" stroke-width="0.6"/></svg><div class="t b" style="left:261px;top:351px;color:#111;letter-spacing:-0.72px">Disabled</div><div class="t " style="left:375px;top:351px;color:#777">From</div><div class="box " style="left:405px;top:346px;width:203px;height:21px;border-color:#e4e4e4"></div><svg style="left:408px;top:349px;" width="16" height="15" viewBox="0 0 16 15"><rect x="2" y="2" width="9" height="10" fill="#dde6ee" stroke="#c8d0d8" stroke-width="0.8"/><rect x="6" y="5" width="9" height="9" fill="#e8eef4" stroke="#c8d0d8" stroke-width="0.8"/></svg><div class="t " style="left:426px;top:351px;color:#b0b0b0">System (SMTP/POP3)</div><div class="t " style="left:239px;top:372px;color:#5a3a9a">Notification is disabled</div><div class="box " style="left:239px;top:389px;width:369px;height:19px;border-color:#e6e6e6"></div><div class="t " style="left:243px;top:393px;color:#999;font-style:italic;letter-spacing:-0.7px">CC Recipients</div><div class="a" style="left:621px;top:332px;width:5px;height:1px;background:#dcdcdc"></div><div class="t b" style="left:628px;top:325px;color:#6a6a6a">Schedule</div><div class="a" style="left:679px;top:332px;width:134px;height:1px;background:#dcdcdc"></div><div class="t " style="left:482px;top:349px;width:200px;text-align:right;color:#707070">Begin Work:</div><div class="box " style="left:685px;top:344px;width:124px;height:21px;"></div><div class="a" style="left:795px;top:345px;width:1px;height:19px;background:#d8d8d8"></div><svg style="left:688px;top:347px;" width="12" height="15" viewBox="0 0 12 15"><rect x="1" y="1" width="9" height="13" fill="#f4f0e0" stroke="#999" stroke-width="0.8"/><path d="M3 3 L8 3 L5.5 7.5 L8 12 L3 12 L5.5 7.5 Z" fill="#e8d890" stroke="#aaa" stroke-width="0.6"/></svg><div class="t " style="left:706px;top:349px;color:#1a1a1a">ASAP</div><div class="t " style="left:482px;top:375px;width:200px;text-align:right;color:#707070">Due By:</div><div class="box " style="left:685px;top:370px;width:124px;height:21px;"></div><div class="a" style="left:795px;top:371px;width:1px;height:19px;background:#d8d8d8"></div><svg style="left:688px;top:373px;" width="13" height="14" viewBox="0 0 13 14"><circle cx="6.5" cy="7.5" r="5.3" fill="#f4f4f4" stroke="#999" stroke-width="1.2"/><line x1="6.5" y1="7.5" x2="6.5" y2="4" stroke="#888" stroke-width="0.9"/><line x1="6.5" y1="7.5" x2="9" y2="7.5" stroke="#888" stroke-width="0.9"/><rect x="5.5" y="0.5" width="2" height="1.5" fill="#999"/></svg><div class="t " style="left:706px;top:375px;color:#1a1a1a">ASAP</div><div class="a" style="left:816px;top:332px;width:5px;height:1px;background:#dcdcdc"></div><div class="t b" style="left:824px;top:325px;color:#6a6a6a">Importance</div><div class="a" style="left:887px;top:332px;width:62px;height:1px;background:#dcdcdc"></div><div class="t " style="left:663px;top:349px;width:200px;text-align:right;color:#808080">Urgency:</div><div class="box " style="left:866px;top:344px;width:79px;height:21px;border-color:#e6e6e6"></div><svg style="left:869px;top:347px;" width="15" height="15" viewBox="0 0 15 15"><circle cx="7.5" cy="7.5" r="6.5" fill="#bde0ea"/><rect x="6.5" y="3" width="2" height="6" fill="#e0f0f5"/><rect x="6.5" y="10" width="2" height="2" fill="#e0f0f5"/></svg><div class="t " style="left:887px;top:349px;color:#b5b5b5">Medium</div><div class="t " style="left:663px;top:375px;width:200px;text-align:right;color:#707070">Priority:</div><div class="box " style="left:866px;top:370px;width:79px;height:21px;"></div><svg style="left:869px;top:373px;" width="15" height="15" viewBox="0 0 15 15"><circle cx="7.5" cy="7.5" r="6.5" fill="#2a90b8"/><circle cx="7.5" cy="7.5" r="6.5" fill="none" stroke="#1a6080" stroke-width="0.8"/><rect x="6.3" y="3" width="2.4" height="6" fill="#222"/><rect x="6.3" y="10" width="2.4" height="2.2" fill="#222"/></svg><div class="t b" style="left:887px;top:375px;color:#111">Medium</div><div class="a" style="left:229px;top:423px;width:388px;height:1px;background:#dcdcdc"></div><div class="a" style="left:621px;top:423px;width:192px;height:1px;background:#dcdcdc"></div><div class="a" style="left:816px;top:423px;width:133px;height:1px;background:#dcdcdc"></div><div class="a" style="left:227px;top:435px;width:5px;height:1px;background:#dcdcdc"></div><div class="t b" style="left:236px;top:428px;color:#6a6a6a">Memo</div><div class="a" style="left:272px;top:435px;width:680px;height:1px;background:#dcdcdc"></div><div class="t " style="left:102px;top:449px;width:200px;text-align:right;color:#707070">Time Worked:</div><div class="box " style="left:304px;top:444px;width:306px;height:21px;"></div><div class="a" style="left:596px;top:445px;width:1px;height:19px;background:#d8d8d8"></div><div class="t " style="left:307px;top:449px;color:#1a1a1a">0 minute on Thu, 27-Feb-2020 at 11:08 AM</div><div class="t " style="left:476px;top:449px;width:200px;text-align:right;color:#707070">Time Code:</div><div class="box " style="left:678px;top:444px;width:87px;height:21px;"></div><div class="t " style="left:682px;top:449px;color:#1a1a1a">1</div><div class="box " style="left:778px;top:450px;width:11px;height:11px;border-color:#d0d0d0"></div><div class="t " style="left:794px;top:449px;color:#222">Private Memo</div><div class="a" style="left:237px;top:472px;width:707px;height:22px;border:1px solid #d6d6d6;background:#fff"></div><div class="box " style="left:238px;top:473px;width:114px;height:19px;border-color:#e0e0e0"></div><div class="t " style="left:241px;top:477px;color:#888">Times New Roman</div><div class="box " style="left:356px;top:473px;width:39px;height:19px;border-color:#e0e0e0"></div><div class="t " style="left:359px;top:477px;color:#888">9</div><div class="a" style="left:401px;top:472px;width:70px;height:21px;border:1px solid #e0e0e0"></div><div class="a" style="left:475px;top:472px;width:81px;height:21px;border:1px solid #e0e0e0"></div><div class="a" style="left:561px;top:472px;width:39px;height:21px;border:1px solid #e0e0e0"></div><div class="a" style="left:599px;top:472px;width:38px;height:21px;border:1px solid #e0e0e0"></div><div class="a" style="left:636px;top:472px;width:60px;height:21px;border:1px solid #e0e0e0"></div><div class="a" style="left:695px;top:472px;width:20px;height:21px;border:1px solid #e0e0e0"></div><div class="a" style="left:716px;top:472px;width:81px;height:21px;border:1px solid #e0e0e0"></div><div class="a" style="left:798px;top:472px;width:21px;height:21px;border:1px solid #e0e0e0"></div><div class="a" style="left:420px;top:473px;width:1px;height:19px;background:#e6e6e6"></div><div class="a" style="left:440px;top:473px;width:1px;height:19px;background:#e6e6e6"></div><div class="a" style="left:515px;top:473px;width:1px;height:19px;background:#e6e6e6"></div><div class="a" style="left:535px;top:473px;width:1px;height:19px;background:#e6e6e6"></div><div class="a" style="left:737px;top:473px;width:1px;height:19px;background:#e6e6e6"></div><div class="a" style="left:757px;top:473px;width:1px;height:19px;background:#e6e6e6"></div><div class="a" style="left:777px;top:473px;width:1px;height:19px;background:#e6e6e6"></div><div class="a" style="left:476px;top:473px;width:19px;height:19px;background:#2b9ad8"></div><svg style="left:0px;top:0px;" width="960" height="653" viewBox="0 0 960 653"><text x="410.5" y="486.3" text-anchor="middle" font-family="Liberation Serif" font-weight="bold" font-size="12" fill="#111">B</text><text x="430.5" y="486.3" text-anchor="middle" font-family="Liberation Serif" font-style="italic" font-weight="bold" font-size="12" fill="#111">I</text><text x="450" y="486" text-anchor="middle" font-family="Liberation Serif" font-weight="bold" font-size="12" fill="#111">U</text><rect x="446" y="487" width="8" height="1" fill="#111"/><polygon points="462.5,481.5 468.5,481.5 465.5,484.5" fill="#111"/><rect x="479.8" y="477.0" width="12.5" height="1.2" fill="#10304a"/><rect x="479.8" y="478.85" width="9" height="1.2" fill="#10304a"/><rect x="479.8" y="480.7" width="12.5" height="1.2" fill="#10304a"/><rect x="479.8" y="482.55" width="9" height="1.2" fill="#10304a"/><rect x="479.8" y="484.4" width="12.5" height="1.2" fill="#10304a"/><rect x="479.8" y="486.25" width="9" height="1.2" fill="#10304a"/><rect x="498.2" y="477.0" width="12.5" height="1.2" fill="#2a2a2a"/><rect x="499.95" y="478.85" width="9" height="1.2" fill="#2a2a2a"/><rect x="498.2" y="480.7" width="12.5" height="1.2" fill="#2a2a2a"/><rect x="499.95" y="482.55" width="9" height="1.2" fill="#2a2a2a"/><rect x="498.2" y="484.4" width="12.5" height="1.2" fill="#2a2a2a"/><rect x="499.95" y="486.25" width="9" height="1.2" fill="#2a2a2a"/><rect x="518.4" y="477.0" width="12.5" height="1.2" fill="#2a2a2a"/><rect x="521.9" y="478.85" width="9" height="1.2" fill="#2a2a2a"/><rect x="518.4" y="480.7" width="12.5" height="1.2" fill="#2a2a2a"/><rect x="521.9" y="482.55" width="9" height="1.2" fill="#2a2a2a"/><rect x="518.4" y="484.4" width="12.5" height="1.2" fill="#2a2a2a"/><rect x="521.9" y="486.25" width="9" height="1.2" fill="#2a2a2a"/><rect x="538.3" y="477.0" width="12.5" height="1.2" fill="#2a2a2a"/><rect x="538.3" y="478.85" width="12.5" height="1.2" fill="#2a2a2a"/><rect x="538.3" y="480.7" width="12.5" height="1.2" fill="#2a2a2a"/><rect x="538.3" y="482.55" width="12.5" height="1.2" fill="#2a2a2a"/><rect x="538.3" y="484.4" width="12.5" height="1.2" fill="#2a2a2a"/><rect x="538.3" y="486.25" width="12.5" height="1.2" fill="#2a2a2a"/><rect x="565" y="476" width="9" height="7" fill="#e8e860" opacity="0.6"/><text x="565.3" y="482.6" font-family="Liberation Sans" font-size="8.5" font-weight="bold" fill="#333" letter-spacing="-0.5">ab</text><path d="M574 484 L579.5 477 L581 478.5 L575.5 485.5 Z" fill="#9ab0c8" stroke="#456" stroke-width="0.5"/><rect x="565.5" y="486" width="14" height="3" fill="#f2f000"/><polygon points="588,481.0 594,481.0 591,484.0" fill="#888"/><text x="611" y="485.6" text-anchor="middle" font-family="Liberation Serif" font-weight="bold" font-size="12.5" fill="#1e3e8c">A</text><rect x="604" y="486" width="13.5" height="3.3" fill="#e81010"/><polygon points="626,481.0 632,481.0 629,484.0" fill="#888"/><rect x="643.5" y="477" width="10.5" height="8.5" fill="#c4dcf2" stroke="#a8c4e0" stroke-width="0.6"/><rect x="645" y="481" width="4" height="3.5" fill="#e8f0f8"/><rect x="667" y="477" width="10.5" height="10.5" fill="#fff" stroke="#38589a" stroke-width="1"/><g stroke="#38589a" stroke-width="0.7"><line x1="669.6" y1="477" x2="669.6" y2="487.5"/><line x1="672.2" y1="477" x2="672.2" y2="487.5"/><line x1="674.8" y1="477" x2="674.8" y2="487.5"/><line x1="667" y1="479.6" x2="677.5" y2="479.6"/><line x1="667" y1="482.2" x2="677.5" y2="482.2"/><line x1="667" y1="484.8" x2="677.5" y2="484.8"/></g><polygon points="681.5,480.0 687.5,480.0 684.5,483.0" fill="#111"/><path d="M698 478 L710 478 L710 484 L707.5 486.5 L698 486.5 Z" fill="#e8c820" stroke="#c0a010" stroke-width="0.6"/><g stroke="#6080b8" stroke-width="1.1" fill="none"><circle cx="723" cy="486" r="1.9"/><circle cx="728.5" cy="486" r="1.9"/><line x1="723.8" y1="484.2" x2="728.2" y2="477"/><line x1="727.7" y1="484.2" x2="723.3" y2="477"/></g><rect x="739" y="477.5" width="7" height="8" fill="#eef2f8" stroke="#b0bccc" stroke-width="0.7"/><rect x="744" y="480.5" width="7.5" height="8" fill="#d8e4f4" stroke="#9aaac0" stroke-width="0.7"/><rect x="759" y="478" width="9.5" height="10" fill="#e0b030" stroke="#906818" stroke-width="0.7"/><rect x="761.5" y="476.5" width="4.5" height="2.5" fill="#888"/><rect x="765.5" y="482" width="7.5" height="6.5" fill="#d0d8e8" stroke="#445" stroke-width="0.8"/><rect x="780" y="477.5" width="12" height="11.5" fill="#f2d8a8" stroke="#d8b880" stroke-width="0.7"/><rect x="783.5" y="476" width="5" height="2.5" fill="#8c8"/><text x="786" y="487" text-anchor="middle" font-family="Liberation Sans" font-size="6" fill="#fff" font-weight="bold">TXT</text><rect x="801" y="476.5" width="11" height="7.5" fill="#fff" stroke="#556" stroke-width="0.9"/><text x="806.5" y="482.7" text-anchor="middle" font-family="Liberation Sans" font-size="6" font-weight="bold" fill="#111">AB</text><path d="M807 488 L812.5 482.5 L815.5 485.5 L810 491 Z" fill="#e8eef6" stroke="#556" stroke-width="0.8"/><g stroke="#999" stroke-width="0.8"><line x1="936" y1="486" x2="941" y2="486"/></g><polygon points="936,488 941,488 938.5,490.5" fill="#888"/></svg><div class="a" style="left:237px;top:495px;width:708px;height:143px;border:1px solid #d6d6d6;background:#fff"></div><svg style="left:0px;top:0px;" width="960" height="653" viewBox="0 0 960 653"><polygon points="574.5,271.0 580.5,271.0 577.5,274.0" fill="#111"/><polygon points="574.5,297.0 580.5,297.0 577.5,300.0" fill="#111"/><polygon points="935,220.0 941,220.0 938,223.0" fill="#555"/><polygon points="360,354.5 366,354.5 363,357.5" fill="#555"/><polygon points="598,354.5 604,354.5 601,357.5" fill="#c8c8c8"/><polygon points="799,353.0 805,353.0 802,356.0" fill="#555"/><polygon points="799,379.0 805,379.0 802,382.0" fill="#555"/><polygon points="935.3,353.0 941.3,353.0 938.3,356.0" fill="#cfcfcf"/><polygon points="935.3,379.0 941.3,379.0 938.3,382.0" fill="#555"/><polygon points="600,453.0 606,453.0 603,456.0" fill="#555"/><polygon points="754,453.5 760,453.5 757,456.5" fill="#555"/><polygon points="342,481.0 348,481.0 345,484.0" fill="#333"/><polygon points="385,481.0 391,481.0 388,484.0" fill="#333"/></svg>
</body></html>
